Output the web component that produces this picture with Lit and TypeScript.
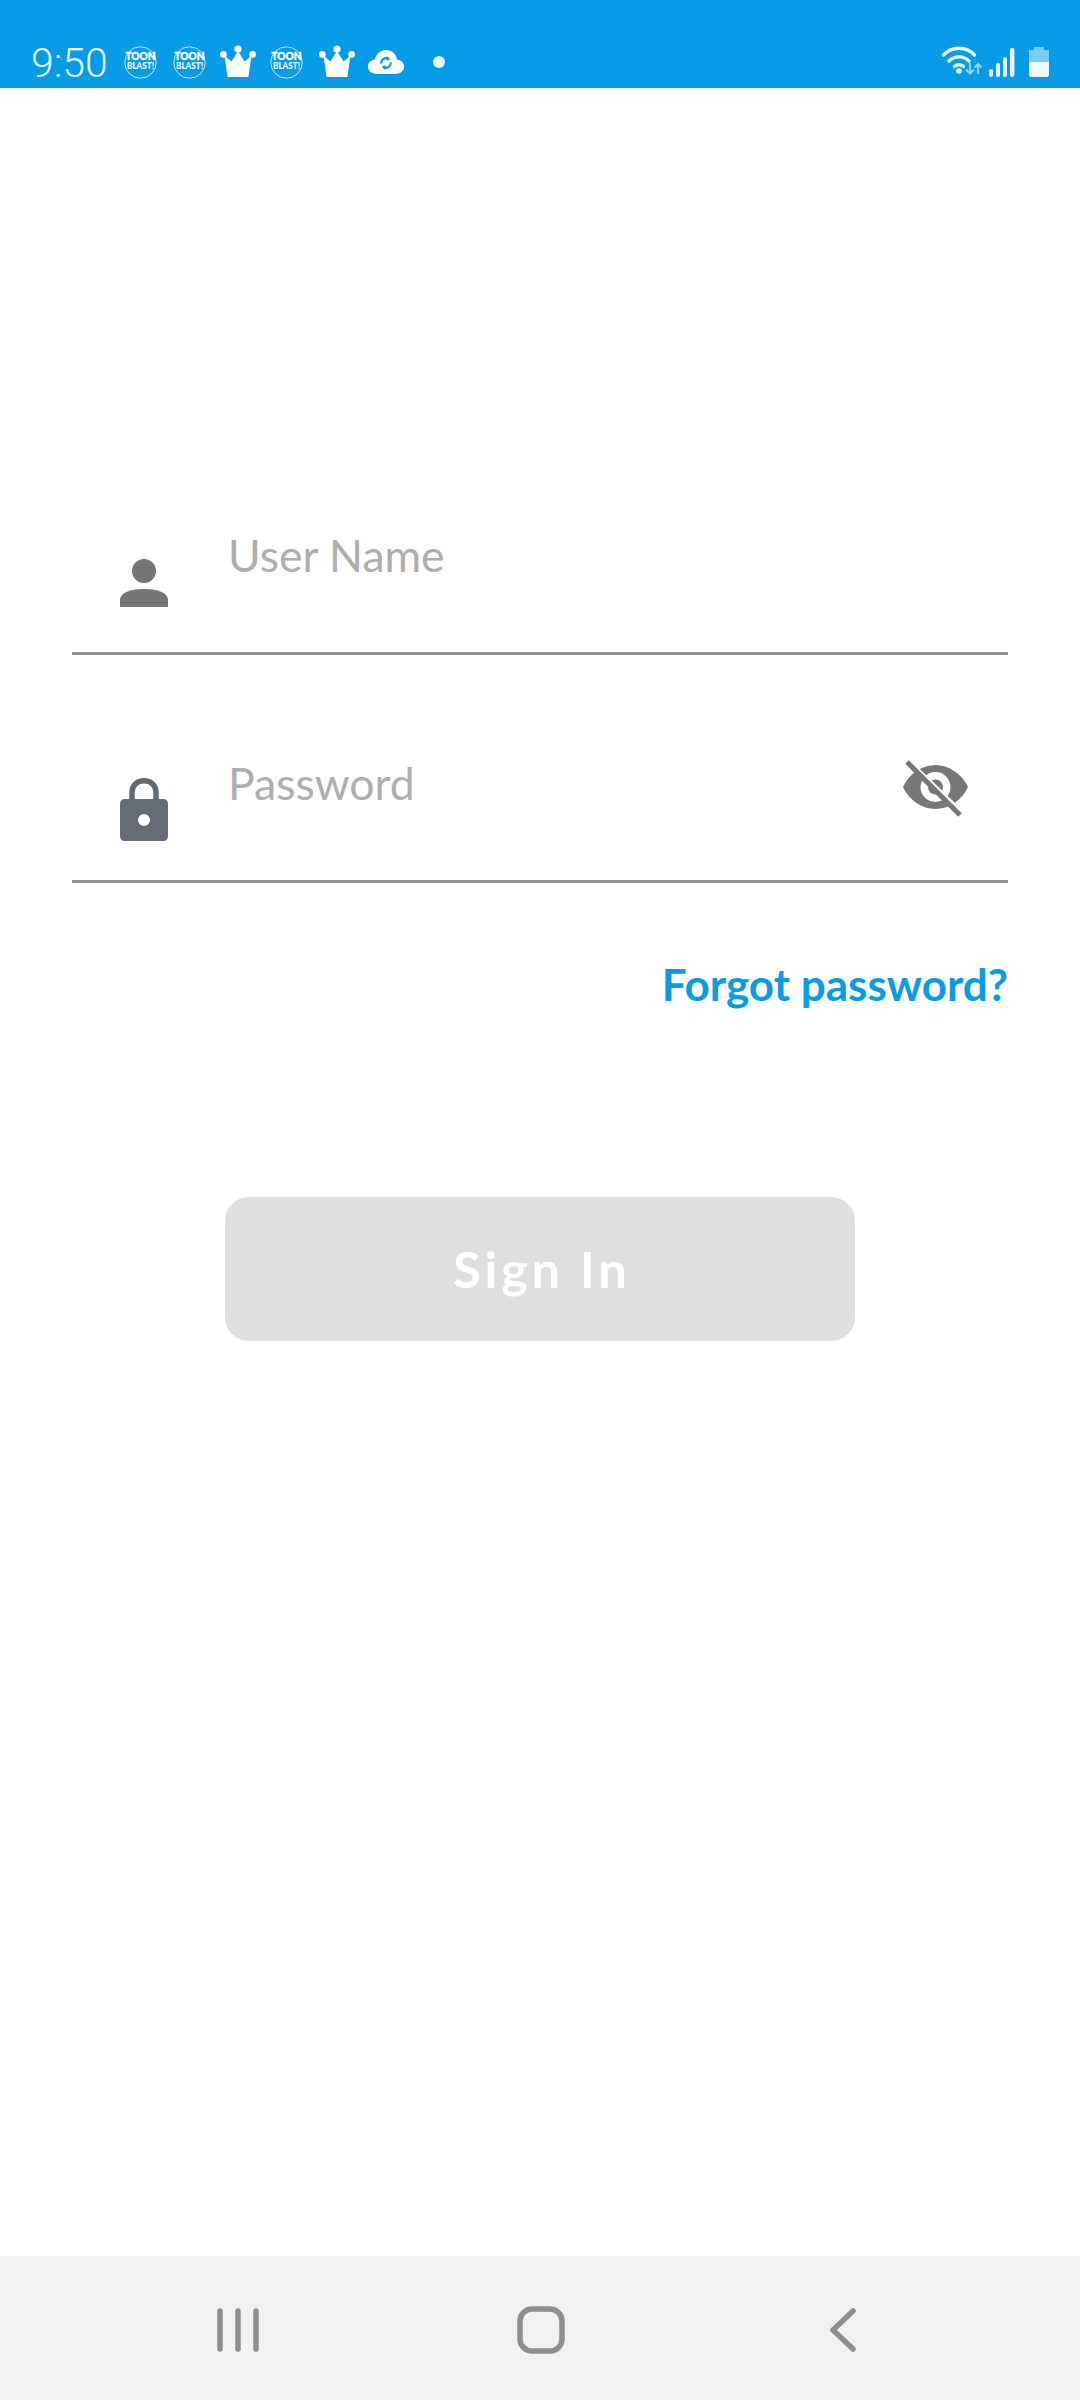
import { LitElement, html, css } from "lit";
import { customElement } from "lit/decorators.js";

const toon = () => html`<svg class="toon" viewBox="0 0 33 33" width="33" height="33">
  <circle cx="16.5" cy="16.5" r="15.7" fill="none" stroke="#fff" stroke-width=".8" />
  <text x="16.5" y="14" text-anchor="middle" font-family="Lato, sans-serif" font-weight="900" font-size="11" textLength="30" lengthAdjust="spacingAndGlyphs" fill="#fff" stroke="#fff" stroke-width=".4">TOON</text>
  <text x="16.5" y="23" text-anchor="middle" font-family="Lato, sans-serif" font-weight="900" font-size="8.6" textLength="27" lengthAdjust="spacingAndGlyphs" fill="#fff">BLAST!</text>
</svg>`;

const crown = () => html`<svg class="crown" viewBox="0 0 36 32" width="36" height="32">
  <g fill="#fff">
    <circle cx="18" cy="4" r="3.6" /><circle cx="3.4" cy="9.4" r="3.3" /><circle cx="32.6" cy="9.4" r="3.3" />
    <path d="M18 6 L24.6 16.5 L31.5 10.5 L28.4 32 H7.6 L4.5 10.5 L11.4 16.5 Z" />
  </g>
</svg>`;

@customElement("app-root")
export class AppRoot extends LitElement {
  static styles = css`
    :host { display: block; width: 1080px; height: 2400px; background: #fff; overflow: hidden; }
    .page { display: flex; flex-direction: column; height: 2400px; }

    .status { height: 88px; flex: none; background: #059be6; color: #fff; display: flex; align-items: flex-start; padding: 0 28px 0 31px; box-sizing: border-box; }
    .time { font: 300 41px/46px Roboto, sans-serif; margin-top: 40px; width: 93px; flex: none; color: #eef9ff; }
    .notif { display: flex; align-items: center; margin-top: 45px; height: 34px; }
    .toon { display: block; overflow: visible; }
    .crown { display: block; margin: -2px 0 0; }
    .g16 { margin-left: 16px; }
    .g15 { margin-left: 14px; }
    .g16b { margin-left: 16px; }
    .cloud { display: block; margin-left: 13px; margin-top: 0; }
    .dot { width: 12px; height: 12px; border-radius: 50%; background: #eaf7fe; margin-left: 29px; }
    .sys { margin-left: auto; margin-top: 45px; display: block; }

    main { flex: 1; padding: 437px 72px 0; display: flex; flex-direction: column; }
    .field { height: 130px; box-sizing: border-box; border-bottom: 3px solid #939393; display: flex; align-items: flex-start; padding: 0 40px 0 48px; flex: none; }
    .field + .field { margin-top: 98px; }
    .ico { display: block; flex: none; }
    .person { margin-top: 34px; }
    .lock { margin-top: 25px; }
    .label { font: 400 44.5px/60px Lato, sans-serif; color: #adadad; margin-left: 60px; margin-top: 0; }
    .eye { display: block; margin-left: auto; margin-top: 7px; flex: none; }
    .forgot { align-self: flex-end; font: 700 44px/60px Lato, sans-serif; color: #0b9be3; margin-top: 71px; }
    .signin { align-self: center; width: 630px; height: 144px; flex: none; margin-top: 183px; border-radius: 24px; background: #dfdfdf; color: #fff; display: flex; align-items: center; justify-content: center; padding-left: 4px; box-sizing: border-box; font: 700 50px/60px Lato, sans-serif; letter-spacing: 4px; }

    nav { height: 144px; flex: none; background: #f1f1f1; display: flex; align-items: center; padding: 4px 0 0 217px; box-sizing: border-box; }
    nav svg { display: block; flex: none; }
    .home { margin-left: 258px; }
    .back { margin-left: 265px; }
  `;

  render() {
    return html`<div class="page">
      <div class="status">
        <span class="time">9:50</span>
        <div class="notif">
          ${toon()}<span class="g16"></span>${toon()}<span class="g15"></span>${crown()}<span class="g15"></span>${toon()}<span class="g16b"></span>${crown()}
          <svg class="cloud" viewBox="0 0 36 24" width="36" height="24">
            <path fill="#fff" d="M9 24 C3.5 24 0 20.8 0 16.6 C0 12.6 3 9.9 6.8 9.6 C8 4 12.6 0 18 0 C23.6 0 28 3.8 29 9.4 C33 9.8 36 12.6 36 16.6 C36 20.8 32.6 24 27.5 24 Z" />
            <g fill="none" stroke="#059be6" stroke-width="2.2">
              <path d="M13.2 13.6 A5 5 0 0 1 20 8.6" /><path d="M22.8 12.4 A5 5 0 0 1 16 17.4" />
            </g>
            <path fill="#059be6" d="M19 6 L22.4 9.4 L18.4 10.8 Z M17 20 L13.6 16.6 L17.6 15.2 Z" />
          </svg>
          <span class="dot"></span>
        </div>
        <svg class="sys" viewBox="0 0 111 34" width="111" height="34">
          <g fill="none" stroke="#eaf7fe" stroke-width="3.4" stroke-linecap="round">
            <path d="M2.5 10 C11 1 25 1 33.5 10" /><path d="M8 16 C13.5 10.5 22.5 10.5 28 16" /><path d="M13.5 21.5 C16 19.2 20 19.2 22.5 21.5" />
          </g>
          <circle cx="18" cy="26" r="2.8" fill="#eaf7fe" />
          <g fill="none" stroke="#8fd2f5" stroke-width="2.2">
            <path d="M29 18 V28 M25 24.5 L29 28.5 L33 24.5" /><path d="M37 29 V19 M33.5 22.5 L37 19 L40.5 22.5" />
          </g>
          <g fill="#eaf7fe">
            <rect x="48" y="24" width="4" height="8" rx="2" /><rect x="55" y="18" width="4" height="14" rx="2" /><rect x="62" y="12" width="4" height="20" rx="2" /><rect x="69" y="3" width="4.4" height="29" rx="2.2" />
          </g>
          <path fill="#7cc9f3" d="M93 2 H103 V5 H108 V17 H88 V5 H93 Z" />
          <path fill="#eefaff" d="M88 17 H108 V30 Q108 32 106 32 H90 Q88 32 88 30 Z" />
        </svg>
      </div>

      <main>
        <div class="field">
          <svg class="ico person" viewBox="0 0 48 48" width="48" height="48">
            <circle cx="24" cy="12" r="12" fill="#757575" />
            <path fill="#757575" d="M0 48 V41 C0 33 12 30 24 30 C36 30 48 33 48 41 V48 Z" />
          </svg>
          <span class="label">User Name</span>
        </div>
        <div class="field">
          <svg class="ico lock" viewBox="0 0 48 63" width="48" height="63">
            <path fill="none" stroke="#636b74" stroke-width="5.5" d="M12 24 V14.6 C12 7.5 17 2.8 24 2.8 C31 2.8 36 7.5 36 14.6 V24" />
            <path fill="#636b74" fill-rule="evenodd" d="M5 21 H43 Q48 21 48 26 V58 Q48 63 43 63 H5 Q0 63 0 58 V26 Q0 21 5 21 Z M24 36 A6 6 0 1 0 24 48 A6 6 0 1 0 24 36 Z" />
          </svg>
          <span class="label">Password</span>
          <svg class="eye" viewBox="0 0 65 57" width="65" height="57">
            <path fill="#777" fill-rule="evenodd" d="M0 27 C6 14 19 5 32.5 5 C46 5 59 14 65 27 C59 40 46 49 32.5 49 C19 49 6 40 0 27 Z M32.5 12 A15 15 0 1 0 32.5 42 A15 15 0 1 0 32.5 12 Z" />
            <circle cx="32.5" cy="27" r="7.5" fill="#777" />
            <path d="M7 3 L60 54" stroke="#fff" stroke-width="5" />
            <path d="M4 2 L57 55" stroke="#777" stroke-width="5" />
          </svg>
        </div>
        <span class="forgot">Forgot password?</span>
        <div class="signin">Sign In</div>
      </main>

      <nav>
        <svg viewBox="0 0 42 44" width="42" height="44">
          <g stroke="#8e8e8e" stroke-width="5.5" stroke-linecap="round">
            <path d="M3 3 V41" /><path d="M21 3 V41" /><path d="M39 3 V41" />
          </g>
        </svg>
        <svg class="home" viewBox="0 0 48 48" width="48" height="48">
          <rect x="3" y="3" width="42" height="42" rx="12" fill="none" stroke="#8e8e8e" stroke-width="5.5" />
        </svg>
        <svg class="back" viewBox="0 0 26 44" width="26" height="44">
          <path d="M23 3 L3 22 L23 41" fill="none" stroke="#8e8e8e" stroke-width="5.5" stroke-linecap="round" stroke-linejoin="round" />
        </svg>
      </nav>
    </div>`;
  }
}
